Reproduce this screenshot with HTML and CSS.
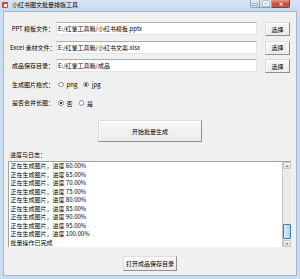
FILE: index.html
```html
<!DOCTYPE html>
<html lang="zh-CN">
<head>
    <meta charset="UTF-8">
    <title>小红书图文批量排版工具</title>
    <link rel="stylesheet" href="styles.css">
</head>
<body>
    <div class="window">
        <header class="titlebar">
            <span class="app-icon"></span>
            <span class="title">小红书图文批量排版工具</span>
            <div class="controls">
                <span class="ctl ctl-min"></span>
                <span class="ctl ctl-max"></span>
                <span class="ctl ctl-close">✕</span>
            </div>
        </header>

        <main class="client">
            <div class="form">
                <label class="label">PPT 模板文件：</label>
                <div class="entry">E:/红薯工具箱/小红书模板.pptx</div>
                <button class="btn btn-pick">选择</button>

                <label class="label">Excel 素材文件：</label>
                <div class="entry">E:/红薯工具箱/小红书文案.xlsx</div>
                <button class="btn btn-pick">选择</button>

                <label class="label">成品保存目录：</label>
                <div class="entry">E:/红薯工具箱/成品</div>
                <button class="btn btn-pick">选择</button>

                <label class="label">生成图片格式：</label>
                <div class="radios">
                    <span class="radio"><span class="dot"></span>png</span>
                    <span class="radio"><span class="dot checked"></span>jpg</span>
                </div>

                <label class="label">是否合并长图：</label>
                <div class="radios">
                    <span class="radio"><span class="dot checked"></span>否</span>
                    <span class="radio"><span class="dot"></span>是</span>
                </div>
            </div>

            <button class="btn btn-start">开始批量生成</button>

            <div class="log-label">进度与日志：</div>
            <div class="logbox">
                <div class="log">
                    <div>正在生成图片，进度 60.00%</div>
                    <div>正在生成图片，进度 65.00%</div>
                    <div>正在生成图片，进度 70.00%</div>
                    <div>正在生成图片，进度 75.00%</div>
                    <div>正在生成图片，进度 80.00%</div>
                    <div>正在生成图片，进度 85.00%</div>
                    <div>正在生成图片，进度 90.00%</div>
                    <div>正在生成图片，进度 95.00%</div>
                    <div>正在生成图片，进度 100.00%</div>
                    <div>批量操作已完成</div>
                </div>
                <div class="scrollbar">
                    <span class="sb-arrow">▴</span>
                    <div class="sb-track"><span class="sb-thumb"></span></div>
                    <span class="sb-arrow">▾</span>
                </div>
            </div>

            <button class="btn btn-open">打开成品保存目录</button>
        </main>
    </div>
</body>
</html>
```

FILE: styles.css
```css
body {
    margin: 0;
    font-family: "Noto Sans CJK SC", "Noto Sans", sans-serif;
    font-size: 6px;
    color: #000;
}

.window {
    width: 300px;
    height: 279px;
    background-color: #c9dcf0;
    display: flex;
    flex-direction: column;
}

.titlebar {
    height: 11px;
    display: flex;
    align-items: flex-start;
    background: linear-gradient(#d6e5f5, #c6daef);
}

.app-icon {
    position: relative;
    width: 6px;
    height: 6px;
    margin: 2px 0 0 2px;
    background-color: #e63a35;
    border-radius: 1px;
}

.app-icon::after {
    content: "";
    position: absolute;
    left: 1.5px;
    top: 1.5px;
    width: 3px;
    height: 3px;
    background-color: #fff;
}

.title {
    margin-left: 4px;
    line-height: 10px;
}

.controls {
    margin-left: auto;
    margin-right: 10px;
    display: flex;
}

.ctl {
    height: 8px;
    box-sizing: border-box;
    border: 1px solid #8ea5c2;
    border-top: none;
    background: linear-gradient(#e3ecf6, #c8d8ea);
    display: flex;
    align-items: center;
    justify-content: center;
}

.ctl-min {
    width: 10px;
    border-radius: 0 0 0 2px;
}

.ctl-min::after {
    content: "";
    width: 4px;
    height: 1px;
    margin-top: 2px;
    background-color: #fff;
    box-shadow: 0 0 0 0.5px #5a6f8c;
}

.ctl-max {
    width: 12px;
    border-left: none;
}

.ctl-max::after {
    content: "";
    width: 4px;
    height: 3px;
    border: 1px solid #fff;
    box-shadow: 0 0 0 0.5px #8597b0;
}

.ctl-close {
    width: 18px;
    border-left: none;
    border-color: #8c3a33;
    border-radius: 0 0 2px 0;
    background: linear-gradient(#e09a8f, #c7493a 55%, #c55f50);
    color: #fff;
    font-size: 5px;
    font-weight: bold;
}

.client {
    flex: 1;
    margin: 0 3px 3px;
    background-color: #f0f0f0;
    border: 1px solid #a4b7cd;
    display: flex;
    flex-direction: column;
}

.form {
    display: grid;
    grid-template-columns: 44px 201px 33px;
    grid-auto-rows: 14px;
    column-gap: 2px;
    row-gap: 4.5px;
    padding: 10px 0 0 6px;
}

.label {
    text-align: right;
    line-height: 14px;
    white-space: nowrap;
}

.entry {
    height: 13px;
    box-sizing: border-box;
    background-color: #fff;
    border: 1px solid #e2e3ea;
    border-top-color: #abadb3;
    padding-left: 1px;
    line-height: 11px;
    white-space: nowrap;
}

.radios {
    grid-column: 2 / 4;
    display: flex;
    align-items: center;
    padding-left: 2px;
}

.radio {
    display: flex;
    align-items: center;
    gap: 3px;
    margin-right: 6px;
}

.dot {
    width: 5.5px;
    height: 5.5px;
    box-sizing: border-box;
    border: 1px solid #8a8a8a;
    border-radius: 50%;
    background-color: #fdfdfd;
}

.dot.checked {
    background: radial-gradient(circle, #303030 0 1px, #fdfdfd 1.3px);
}

.btn {
    font-family: inherit;
    font-size: 6px;
    color: #000;
    padding: 0;
    box-sizing: border-box;
    background: linear-gradient(#f6f6f6, #ececec);
    border: 1px solid;
    border-color: #dcdcdc #8e8e8e #8e8e8e #dcdcdc;
    box-shadow: inset 1px 1px 0 #fff;
}

.btn-pick {
    width: 25px;
    height: 14px;
    margin-left: 6px;
}

.btn-start {
    width: 104px;
    height: 22px;
    margin: 10px auto 0;
}

.log-label {
    margin: 9px 0 0 6px;
    line-height: 8px;
}

.logbox {
    display: flex;
    width: 283px;
    height: 86px;
    margin: 2px 0 0 4px;
    box-sizing: border-box;
    border-top: 1px solid #a0a0a0;
    border-left: 1px solid #a0a0a0;
}

.log {
    flex: 1;
    background-color: #fff;
    border-right: 1px solid #c4c4c4;
    padding-left: 1.5px;
    line-height: 8.5px;
    overflow: hidden;
    white-space: nowrap;
}

.scrollbar {
    width: 8px;
    display: flex;
    flex-direction: column;
    background-color: #ebebeb;
}

.sb-arrow {
    height: 7px;
    box-sizing: border-box;
    border: 1px solid #c8c8c8;
    border-radius: 1px;
    background: linear-gradient(#f4f4f4, #dcdcdc);
    color: #606060;
    font-size: 4px;
    line-height: 5px;
    text-align: center;
}

.sb-track {
    flex: 1;
    display: flex;
    flex-direction: column;
    justify-content: flex-end;
    padding-bottom: 1px;
}

.sb-thumb {
    height: 15px;
    box-sizing: border-box;
    border: 1px solid #3c7fb1;
    border-radius: 1px;
    background: linear-gradient(90deg, #d9ecfb, #a9d4f5);
}

.btn-open {
    width: 54px;
    height: 15px;
    margin: 9px auto 0;
}
```
